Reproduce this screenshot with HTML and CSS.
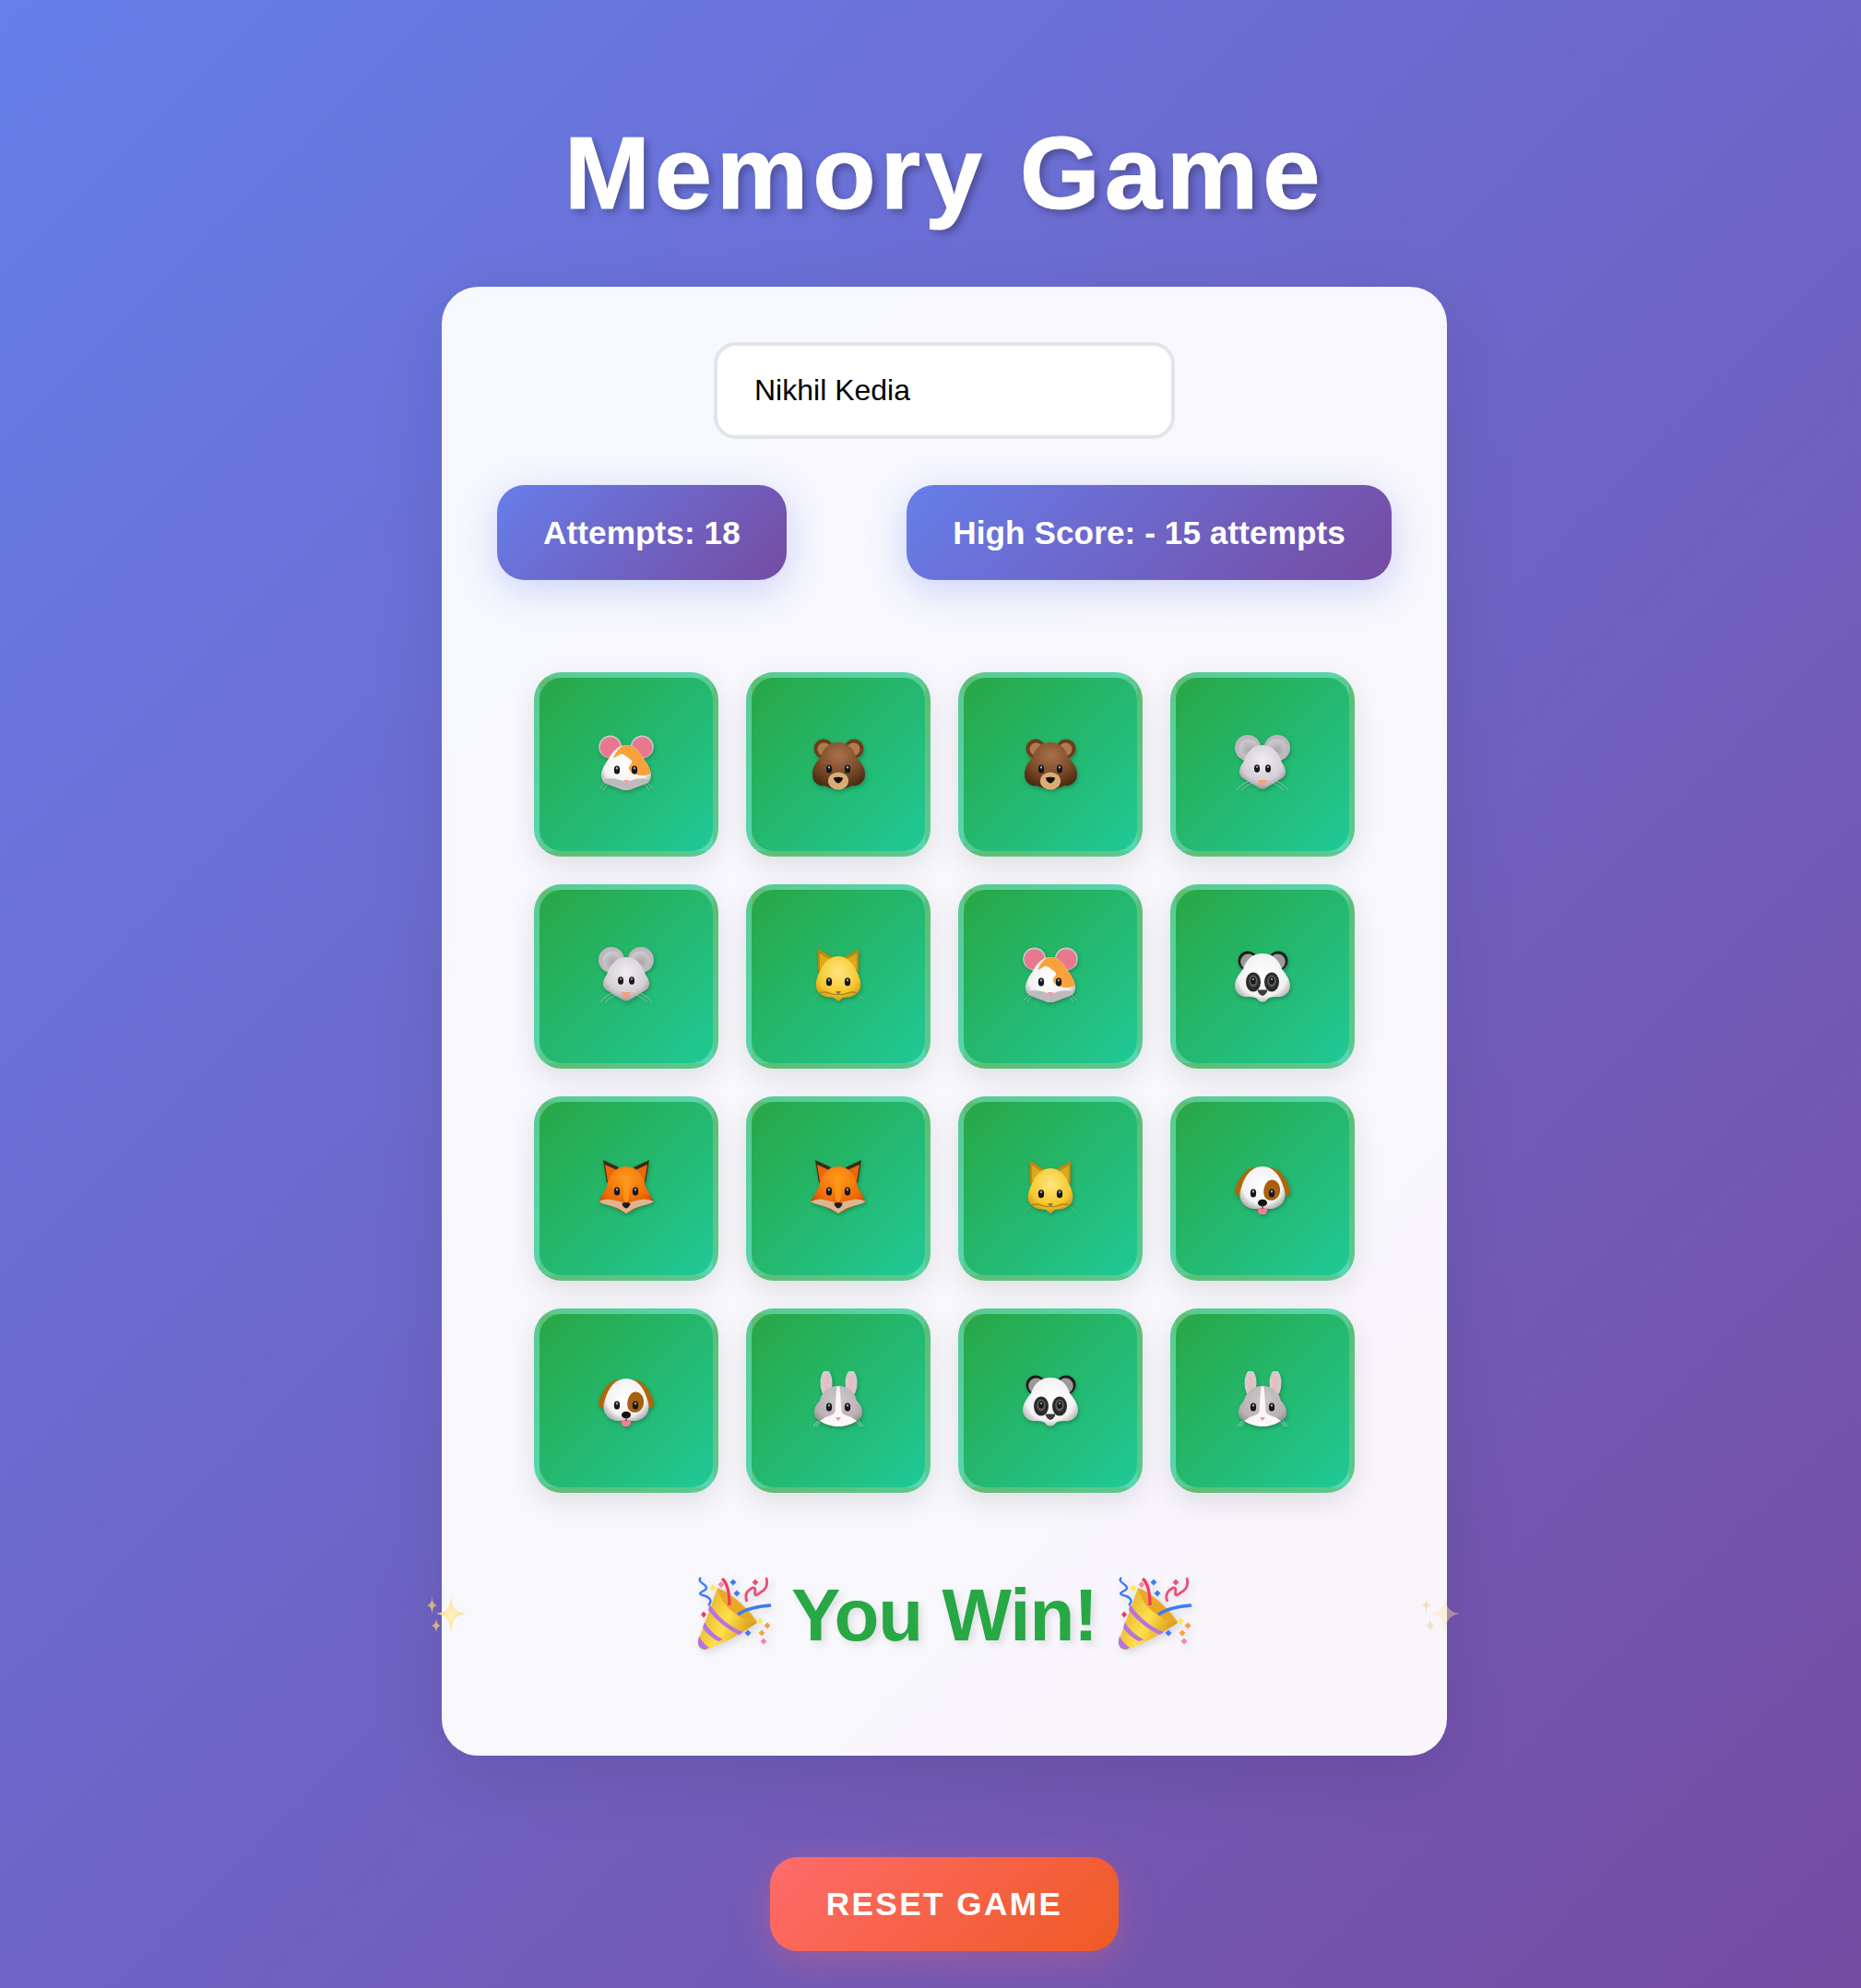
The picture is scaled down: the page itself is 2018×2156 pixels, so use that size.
FILE: index.html
```html
<!DOCTYPE html>
<html lang="en">

<head>
    <meta charset="UTF-8">
    <meta name="viewport" content="width=device-width, initial-scale=1.0">
    <link rel="stylesheet" href="styles.css">
    <title>Memory Game</title>
</head>

<body>
    <svg class="defs" width="0" height="0">
        <defs>
            <radialGradient id="browFur" cx="50%" cy="28%" r="72%">
                <stop offset="0" stop-color="#a9714a" />
                <stop offset="0.6" stop-color="#7a4a28" />
                <stop offset="1" stop-color="#4a2810" />
            </radialGradient>
            <radialGradient id="greyFur" cx="50%" cy="35%" r="70%">
                <stop offset="0" stop-color="#f1edf2" />
                <stop offset="0.65" stop-color="#d5cfd6" />
                <stop offset="1" stop-color="#8e8a90" />
            </radialGradient>
            <radialGradient id="earGrey" cx="55%" cy="60%" r="60%">
                <stop offset="0" stop-color="#a8a4a8" />
                <stop offset="1" stop-color="#cfccd0" />
            </radialGradient>
            <radialGradient id="whiteFur" cx="50%" cy="45%" r="62%">
                <stop offset="0" stop-color="#ffffff" />
                <stop offset="0.7" stop-color="#f2f2f2" />
                <stop offset="1" stop-color="#a5a5a5" />
            </radialGradient>
            <radialGradient id="catFur" cx="50%" cy="35%" r="70%">
                <stop offset="0" stop-color="#ffe680" />
                <stop offset="0.65" stop-color="#f7c82e" />
                <stop offset="1" stop-color="#c98f10" />
            </radialGradient>
            <radialGradient id="foxFur" cx="50%" cy="25%" r="75%">
                <stop offset="0" stop-color="#ff9a1a" />
                <stop offset="0.65" stop-color="#ee6a08" />
                <stop offset="1" stop-color="#b83d04" />
            </radialGradient>
            <radialGradient id="rabbitFur" cx="50%" cy="35%" r="70%">
                <stop offset="0" stop-color="#cfc8ca" />
                <stop offset="0.7" stop-color="#b9b1b3" />
                <stop offset="1" stop-color="#8b8486" />
            </radialGradient>
            <linearGradient id="coneGold" x1="0" y1="0" x2="1" y2="0.5">
                <stop offset="0" stop-color="#d99f22" />
                <stop offset="0.6" stop-color="#ffe04a" />
                <stop offset="1" stop-color="#d9981c" />
            </linearGradient>
            <radialGradient id="sparkleFill" cx="50%" cy="50%" r="50%">
                <stop offset="0" stop-color="#fff4b8" />
                <stop offset="1" stop-color="#ffd479" />
            </radialGradient>

            <symbol id="eye" viewBox="0 0 10 14">
                <ellipse cx="5" cy="7" rx="4.6" ry="6.6" fill="#16161c" />
                <ellipse cx="5" cy="4.4" rx="1.6" ry="2" fill="#9aa3b8" />
            </symbol>

            <symbol id="hamster" viewBox="0 0 60 60">
                <circle cx="12.700" cy="13" r="12.500" fill="#c9c4c8" />
                <circle cx="12.700" cy="13.600" r="11" fill="#e8788f" />
                <circle cx="47.300" cy="13" r="12.500" fill="#c9c4c8" />
                <circle cx="47.300" cy="13.600" r="11" fill="#e8788f" />
                <path d="M30 11C38 11 44 17 49 26C54 33 58 40 57 46C56 50 53 52 49 53L33 59C31 60 29 60 27 59L11 53C7 52 4 50 3 46C2 40 6 33 11 26C16 17 22 11 30 11Z" fill="url(#whiteFur)" />
                <path d="M16 25C20 16 25 11 30 11C38 11 44 17 49 26C53 31 56 36 57 42C52 44 46 45 41 43C36 42 32 38 33 35C35 31 37 30 36 28C32 25 27 20 24 21C21 22 18 25 16 25Z" fill="#f9a23c" />
                <path d="M4 49C13 46 22 47 30 52C38 47 47 46 56 49C54 52 52 53 49 54L33 60H27L11 54C8 53 6 52 4 49Z" fill="#bfbbbc" />
                <path d="M26.500 49H33.500L30 54Z" fill="#f29ba6" />
                <use href="#eye" x="16.500" y="32.500" width="7" height="11" />
                <use href="#eye" x="35.500" y="32.500" width="7" height="11" />
                <path d="M7 52L1 58M9 54L5 60M53 52L59 58M51 54L55 60" stroke="#c5c1c4" stroke-width="0.6" fill="none" />
            </symbol>

            <symbol id="bear" viewBox="0 0 60 60">
                <circle cx="14" cy="15" r="10.500" fill="#6b3d1c" />
                <circle cx="14.500" cy="15.500" r="7" fill="#b07a50" />
                <circle cx="47" cy="15" r="10.500" fill="#6b3d1c" />
                <circle cx="46.500" cy="15.500" r="7" fill="#b07a50" />
                <path d="M30 8C40 8 47 15 49 24C54 29 59 35 59 43C59 51 52 56 45 55C40 57 35 59 30 59C25 59 20 57 15 55C8 56 2 51 2 43C2 35 6 29 11 24C13 15 20 8 30 8Z" fill="url(#browFur)" />
                <ellipse cx="30" cy="50" rx="11" ry="9.500" fill="#d8ae76" />
                <path d="M25 46.500C27 45.500 33 45.500 35 46.500C35 49.500 32 52 30 52.500C28 52 25 49.500 25 46.500Z" fill="#15100e" />
                <use href="#eye" x="16.500" y="31.500" width="7" height="11" />
                <use href="#eye" x="36.500" y="31.500" width="7" height="11" />
            </symbol>

            <symbol id="mouse" viewBox="0 0 60 60">
                <circle cx="14" cy="14" r="14" fill="#bcb8bd" />
                <circle cx="15" cy="15" r="10.500" fill="url(#earGrey)" />
                <circle cx="46" cy="14" r="14" fill="#bcb8bd" />
                <circle cx="45" cy="15" r="10.500" fill="url(#earGrey)" />
                <path d="M30 11C40 11 48 19 51 30C56 37 57 43 51 47L33 58C31 59 29 59 27 58L9 47C3 43 4 37 9 30C12 19 20 11 30 11Z" fill="url(#greyFur)" />
                <path d="M25 49H35C34.500 52 32 55 30 55C28 55 25.500 52 25 49Z" fill="#f2a179" />
                <use href="#eye" x="20.800" y="31" width="6.500" height="11" />
                <use href="#eye" x="32.800" y="31" width="6.500" height="11" />
                <path d="M17 50C11 51 6 55 2 60M19 52C14 54 10 57 7 60M43 50C49 51 54 55 58 60M41 52C46 54 50 57 53 60" stroke="#cfcbce" stroke-width="0.6" fill="none" />
            </symbol>

            <symbol id="cat" viewBox="0 0 60 60">
                <path d="M8 2L27 13L8 27Z" fill="#b98a12" />
                <path d="M10 7L23 14.500L10 24Z" fill="#dba91e" />
                <path d="M52 2L33 13L52 27Z" fill="#b98a12" />
                <path d="M50 7L37 14.500L50 24Z" fill="#dba91e" />
                <path d="M30 10C41 10 48 20 52 31C57 43 54 51 43 54L35 55L30 59L25 55L17 54C6 51 3 43 8 31C12 20 19 10 30 10Z" fill="url(#catFur)" />
                <path d="M10 50C17 46 24 54 30 51C36 54 43 46 50 50" stroke="#b9820f" stroke-width="1.300" fill="none" />
                <path d="M27 48H33L30 52.500Z" fill="#85785e" />
                <use href="#eye" x="16.500" y="32" width="7" height="11.500" />
                <use href="#eye" x="36.500" y="32" width="7" height="11.500" />
                <path d="M8 52L2 57M52 52L58 57" stroke="#b8a765" stroke-width="0.6" fill="none" />
            </symbol>

            <symbol id="fox" viewBox="0 0 60 60">
                <path d="M5 1L22 9L9 26Z" fill="#3c2a1c" />
                <path d="M7 6L20 12L10 25Z" fill="#e8690b" />
                <path d="M55 1L38 9L51 26Z" fill="#3c2a1c" />
                <path d="M53 6L40 12L50 25Z" fill="#e8690b" />
                <path d="M30 8C41 8 49 18 51 30L60 46L44 52L30 59L16 52L0 46L9 30C11 18 19 8 30 8Z" fill="url(#foxFur)" />
                <path d="M0 46C6 43 12 43 14 44C20 45 26 47 30 48C34 47 40 45 46 44C48 43 54 43 60 46C54 50 46 50 38 54L30 59L22 54C14 50 6 50 0 46Z" fill="#dcb68e" />
                <path d="M26 22C28 30 24 42 30 48C36 42 32 30 34 22Z" fill="#ff9a1a" opacity="0.8" />
                <path d="M25.500 48C28 46.500 32 46.500 34.500 48C34.500 50.500 32 53 30 53.500C28 53 25.500 50.500 25.500 48Z" fill="#1f1b1c" />
                <use href="#eye" x="16.500" y="29.500" width="7" height="11" />
                <use href="#eye" x="36.500" y="29.500" width="7" height="11" />
            </symbol>

            <symbol id="dog" viewBox="0 0 60 60">
                <path d="M21 9C10 11 2 24 0 35C0 40 5 42 8 38L17 24Z" fill="#b0660a" />
                <path d="M39 9C50 11 58 24 60 35C60 40 55 42 52 38L43 24Z" fill="#b0660a" />
                <path d="M30 8C41 8 49 17 53 31C58 44 50 53 40 54H20C10 53 2 44 7 31C11 17 19 8 30 8Z" fill="url(#whiteFur)" />
                <path d="M35 25C41 19 50 25 49 35C48 44 39 48 33 42C30 38 31 29 35 25Z" fill="#a8600c" />
                <use href="#eye" x="16.500" y="31.500" width="7" height="11" />
                <use href="#eye" x="36.500" y="31.500" width="7" height="11" />
                <path d="M25 53H35V56C35 62 25 62 25 56Z" fill="#ee7f9b" />
                <ellipse cx="30" cy="47.500" rx="5" ry="3.800" fill="#111" />
                <rect x="29.400" y="49" width="1.200" height="5" fill="#333" />
            </symbol>

            <symbol id="rabbit" viewBox="0 0 60 60">
                <ellipse cx="17" cy="13" rx="6.500" ry="14" fill="#d2cccd" />
                <ellipse cx="17.500" cy="14" rx="3.200" ry="10.500" fill="#e5bec4" />
                <ellipse cx="44" cy="13" rx="6.500" ry="14" fill="#d2cccd" />
                <ellipse cx="43.500" cy="14" rx="3.200" ry="10.500" fill="#e5bec4" />
                <path d="M30 16C41 16 48 23 50 32C55 37 58 44 55 50C48 57 38 60 30 60C22 60 12 57 5 50C2 44 5 37 10 32C12 23 19 16 30 16Z" fill="url(#rabbitFur)" />
                <path d="M28.500 16.500H31.500C32.500 26 33 36 33.500 44C35 47 38 48 44 50L50 54C44 58 36 60 30 60C24 60 16 58 10 54L16 50C22 48 25 47 26.500 44C27 36 27.500 26 28.500 16.500Z" fill="#f8f6f6" />
                <path d="M27 50H33L30 54Z" fill="#ef93a8" />
                <rect x="27" y="55" width="6" height="5" fill="#fff" />
                <use href="#eye" x="16.500" y="33.500" width="7" height="11" />
                <use href="#eye" x="36.500" y="33.500" width="7" height="11" />
                <path d="M8 54L3 60M10 55L6 60M52 54L57 60M50 55L54 60" stroke="#ddd8d9" stroke-width="0.7" fill="none" />
            </symbol>

            <symbol id="panda" viewBox="0 0 60 60">
                <circle cx="14" cy="15" r="10.500" fill="#1d1d1d" />
                <circle cx="14.600" cy="16" r="8.400" fill="#9a9a9a" />
                <circle cx="47" cy="15" r="10.500" fill="#1d1d1d" />
                <circle cx="46.400" cy="16" r="8.400" fill="#9a9a9a" />
                <path d="M30 7C41 7 48 14 51 24C56 30 60 36 60 42C60 50 53 55 45 54C40 54 37 55 36 56C34 59 32 59.500 30 59.500C28 59.500 26 59 24 56C23 55 20 54 15 54C7 55 0 50 0 42C0 36 4 30 9 24C12 14 19 7 30 7Z" fill="url(#whiteFur)" />
                <ellipse cx="20" cy="38" rx="8" ry="10.500" fill="#2a2a2a" />
                <ellipse cx="40" cy="38" rx="8" ry="10.500" fill="#2a2a2a" />
                <ellipse cx="20" cy="37" rx="4.800" ry="6.500" fill="#5b5b5b" />
                <ellipse cx="40" cy="37" rx="4.800" ry="6.500" fill="#5b5b5b" />
                <use href="#eye" x="17" y="31.500" width="6" height="10" />
                <use href="#eye" x="37" y="31.500" width="6" height="10" />
                <path d="M24.500 46.500H35.500C35 50 32 52.500 30 53C28 52.500 25 50 24.500 46.500Z" fill="#3b3b3b" />
            </symbol>

            <symbol id="popper" viewBox="0 0 80 80">
                <path d="M22 12L65 50C50 60 30 72 10 79C4 80 0 76 1 70Z" fill="url(#coneGold)" />
                <path d="M22 12C34 16 54 32 65 49C60 51 45 44 36 36C28 29 24 20 22 12Z" fill="#e8a926" />
                <path d="M13.500 30C22 43 36 55 50 60L46 63C32 57 19 46 12 36Z" fill="#b873e0" />
                <path d="M8 49C12 57 20 64 28 68L23 70C15 66 9 60 6 55Z" fill="#b873e0" />
                <path d="M2 64C4 69 8 73 13 77L9 79C4 79 0 75 1 69Z" fill="#b873e0" />
                <path d="M44 41C54 34 66 32 80 31" stroke="#3f7bf0" stroke-width="3.600" fill="none" />
                <path d="M27 2C33 7 35 20 35 31" stroke="#f4365f" stroke-width="3.200" fill="none" />
                <path d="M4 1C-2 6 14 9 9 14C4 17 0 18 6 20C14 22 17 26 12 31" stroke="#3f7bf0" stroke-width="2.400" fill="none" />
                <path d="M54 27C51 20 54 15 60 12C66 11 60 20 64 20C70 16 78 14 75 1" stroke="#ec4f78" stroke-width="2.800" fill="none" />
                <path d="M39 2.500L42.500 6L39 9.500L35.500 6Z" fill="#3f7bf0" />
                <path d="M26 5L29.500 8.500L26 12L22.500 8.500Z" fill="#ef87ac" />
                <path d="M17 8.500L20.500 12L17 15.500L13.500 12Z" fill="#ffec3f" />
                <path d="M43 14.500L46.500 18L43 21.500L39.500 18Z" fill="#3f7bf0" />
                <path d="M63 2.500L66.500 6L63 9.500L59.500 6Z" fill="#ec4f78" />
                <path d="M7 37.500L10 41L7 44.500L4 41Z" fill="#e3405b" />
                <path d="M68 44.500L71 48L68 51.500L65 48Z" fill="#ffec3f" />
                <path d="M76 49.500L79.500 53L76 56.500L72.500 53Z" fill="#f5a044" />
                <path d="M55 57.500L58.500 61L55 64.500L51.500 61Z" fill="#3f7bf0" />
                <path d="M70 57.500L73.500 61L70 64.500L66.500 61Z" fill="#f5a044" />
                <path d="M72 66.500L75.500 70L72 73.500L68.500 70Z" fill="#ef87ac" />
            </symbol>

            <symbol id="sparkles" viewBox="0 0 42 40">
                <path d="M26 0C27 12 30 17 42 19C30 21 27 27 26 40C25 27 22 21 10 19C22 17 25 12 26 0Z" fill="url(#sparkleFill)" />
                <path d="M5.500 0C6 7 7 9 11 10C7 11 6 13 5.500 20C5 13 4 11 0 10C4 9 5 7 5.500 0Z" fill="#e9c278" />
                <path d="M10 24C10.500 29 11.500 31 15 32C11.500 33 10.500 35 10 40C9.500 35 8.500 33 5 32C8.500 31 9.500 29 10 24Z" fill="#e9c278" />
            </symbol>
        </defs>
    </svg>

    <h1 class="title">Memory Game</h1>

    <main class="panel">
        <input class="player-name" type="text" value="Nikhil Kedia">

        <div class="stats">
            <div class="stat">Attempts: 18</div>
            <div class="stat">High Score: - 15 attempts</div>
        </div>

        <div class="board">
            <div class="tile"><svg class="face" role="img" aria-label="🐹"><use href="#hamster" /></svg></div>
            <div class="tile"><svg class="face" role="img" aria-label="🐻"><use href="#bear" /></svg></div>
            <div class="tile"><svg class="face" role="img" aria-label="🐻"><use href="#bear" /></svg></div>
            <div class="tile"><svg class="face" role="img" aria-label="🐭"><use href="#mouse" /></svg></div>
            <div class="tile"><svg class="face" role="img" aria-label="🐭"><use href="#mouse" /></svg></div>
            <div class="tile"><svg class="face" role="img" aria-label="🐱"><use href="#cat" /></svg></div>
            <div class="tile"><svg class="face" role="img" aria-label="🐹"><use href="#hamster" /></svg></div>
            <div class="tile"><svg class="face" role="img" aria-label="🐼"><use href="#panda" /></svg></div>
            <div class="tile"><svg class="face" role="img" aria-label="🦊"><use href="#fox" /></svg></div>
            <div class="tile"><svg class="face" role="img" aria-label="🦊"><use href="#fox" /></svg></div>
            <div class="tile"><svg class="face" role="img" aria-label="🐱"><use href="#cat" /></svg></div>
            <div class="tile"><svg class="face" role="img" aria-label="🐶"><use href="#dog" /></svg></div>
            <div class="tile"><svg class="face" role="img" aria-label="🐶"><use href="#dog" /></svg></div>
            <div class="tile"><svg class="face" role="img" aria-label="🐰"><use href="#rabbit" /></svg></div>
            <div class="tile"><svg class="face" role="img" aria-label="🐼"><use href="#panda" /></svg></div>
            <div class="tile"><svg class="face" role="img" aria-label="🐰"><use href="#rabbit" /></svg></div>
        </div>

        <div class="win">
            <svg class="popper" role="img" aria-label="🎉"><use href="#popper" /></svg>
            <span>You Win!</span>
            <svg class="popper" role="img" aria-label="🎉"><use href="#popper" /></svg>
            <svg class="sparkle left" role="img" aria-label="✨"><use href="#sparkles" /></svg>
            <svg class="sparkle right" role="img" aria-label="✨"><use href="#sparkles" /></svg>
        </div>
    </main>

    <button class="reset" type="button">RESET GAME</button>
</body>

</html>
```

FILE: styles.css
```css
* {
    margin: 0;
    padding: 0;
    box-sizing: border-box;
}

html {
    overflow: hidden;
}

body {
    height: 2156px;
    padding-left: 30px;
    display: flex;
    flex-direction: column;
    align-items: center;
    background: linear-gradient(135deg, #667eea 0%, #764ba2 100%);
    font-family: "Liberation Sans", Arial, sans-serif;
}

.defs {
    position: absolute;
}

.title {
    margin-top: 123px;
    font-size: 112px;
    line-height: 129px;
    font-weight: 700;
    letter-spacing: 4.8px;
    color: #fff;
    -webkit-text-stroke: 1px #fff;
    text-shadow: 4px 4px 8px rgba(0, 0, 0, 0.3);
    margin-bottom: 59px;
}

.panel {
    width: 1090px;
    padding: 60px;
    display: flex;
    flex-direction: column;
    align-items: center;
    background: rgba(255, 255, 255, 0.95);
    border-radius: 40px;
    box-shadow: 0 20px 80px rgba(0, 0, 0, 0.1);
}

.player-name {
    width: 500px;
    height: 105px;
    padding: 0 40px;
    border: 4px solid #e1e5ea;
    border-radius: 24px;
    background: #fff;
    font-family: inherit;
    font-size: 32px;
    color: #000;
    margin-bottom: 50px;
}

.stats {
    width: 100%;
    display: flex;
    justify-content: space-between;
    margin-bottom: 60px;
}

.stat {
    height: 103px;
    padding: 0 50px;
    display: flex;
    align-items: center;
    border-radius: 30px;
    background: linear-gradient(135deg, #667eea 0%, #764ba2 100%);
    box-shadow: 0 10px 40px rgba(102, 126, 234, 0.3);
    color: #fff;
    font-size: 35.2px;
    font-weight: 700;
    letter-spacing: 0.06px;
}

.board {
    width: 100%;
    padding: 40px;
    display: grid;
    grid-template-columns: repeat(4, 200px);
    gap: 30px;
}

.tile {
    height: 200px;
    display: flex;
    align-items: center;
    justify-content: center;
    border: 6px solid rgba(255, 255, 255, 0.25);
    border-radius: 30px;
    background: linear-gradient(135deg, #28a745 0%, #20c997 100%);
    box-shadow: 0 10px 30px rgba(0, 0, 0, 0.1);
}

.face {
    width: 60px;
    height: 60px;
    margin-bottom: 4px;
    overflow: visible;
    filter: drop-shadow(1px 2px 2px rgba(0, 0, 0, 0.25));
}

.win {
    position: relative;
    width: 100%;
    height: 185px;
    display: flex;
    align-items: center;
    justify-content: center;
    gap: 21px;
    color: #28a745;
    font-size: 80px;
    font-weight: 700;
    letter-spacing: -1px;
    text-shadow: 4px 4px 8px rgba(0, 0, 0, 0.1);
}

.popper {
    width: 82px;
    height: 80px;
    margin-bottom: 4px;
    filter: drop-shadow(3px 3px 4px rgba(0, 0, 0, 0.12));
}

.sparkle {
    position: absolute;
    top: 72px;
    width: 42px;
    height: 40px;
}

.sparkle.left {
    left: -76px;
    opacity: 0.85;
}

.sparkle.right {
    right: -74px;
    opacity: 0.4;
}

.reset {
    margin-top: 110px;
    width: 378px;
    height: 102px;
    border: none;
    border-radius: 30px;
    background: linear-gradient(135deg, #ff6b6b 0%, #ee5a24 100%);
    box-shadow: 0 10px 40px rgba(255, 107, 107, 0.3);
    color: #fff;
    font-family: inherit;
    font-size: 35.2px;
    font-weight: 700;
    letter-spacing: 2.4px;
}
```
